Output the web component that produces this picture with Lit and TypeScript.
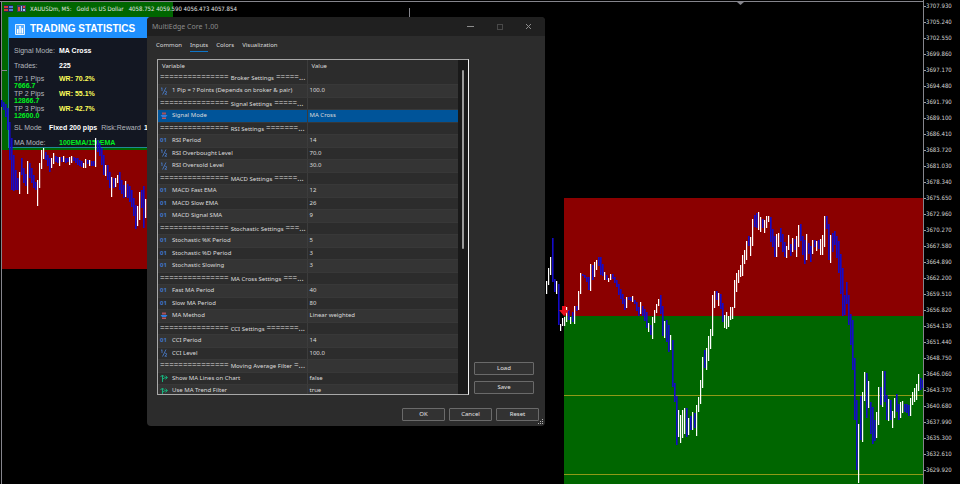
import { LitElement, html, svg, css } from "lit";
import { customElement, property, state } from "lit/decorators.js";
import { classMap } from "lit/directives/class-map.js";

type Kind = "group" | "int" | "real" | "enum" | "bool";
interface Param {
  kind: Kind;
  name: string;
  value: string;
  tail?: string;
}

const group = (name: string, tail: string): Param => ({ kind: "group", name, value: "", tail });
const param = (kind: Kind, name: string, value: string): Param => ({ kind, name, value });

const PARAMS: Param[] = [
  group("Broker Settings", "=====..."),
  param("real", "1 Pip = ? Points (Depends on broker & pair)", "100.0"),
  group("Signal Settings", "=====..."),
  param("enum", "Signal Mode", "MA Cross"),
  group("RSI Settings", "=======..."),
  param("int", "RSI Period", "14"),
  param("real", "RSI Overbought Level", "70.0"),
  param("real", "RSI Oversold Level", "30.0"),
  group("MACD Settings", "=====..."),
  param("int", "MACD Fast EMA", "12"),
  param("int", "MACD Slow EMA", "26"),
  param("int", "MACD Signal SMA", "9"),
  group("Stochastic Settings", "===..."),
  param("int", "Stochastic %K Period", "5"),
  param("int", "Stochastic %D Period", "3"),
  param("int", "Stochastic Slowing", "3"),
  group("MA Cross Settings", "===..."),
  param("int", "Fast MA Period", "40"),
  param("int", "Slow MA Period", "80"),
  param("enum", "MA Method", "Linear weighted"),
  group("CCI Settings", "=======..."),
  param("int", "CCI Period", "14"),
  param("real", "CCI Level", "100.0"),
  group("Moving Average Filter", "=..."),
  param("bool", "Show MA Lines on Chart", "false"),
  param("bool", "Use MA Trend Filter", "true"),
];

// Candles two units apart: start x, then "colour high-low" for each bar.
const parse = (start: number, text: string) =>
  text
    .trim()
    .split(/\s+/)
    .map((bar, i) => {
      const [high, low] = bar.slice(1).split("-").map(Number);
      return { x: start + i * 2, up: bar[0] === "w", high, low };
    });

const LEFT = parse(
  1,
  `b100-107 b102-110 b104-117 b108-130 b122-160 b138-190 b155-191 b170-190 b178-190 w172-194 b158-175 b168-183 b174-186
   w161-194 b163-178 b168-183 b175-188 b182-190 w180-206 w163-188 w150-169 w148-159 b152-160 b155-166 b158-172
   w158-168 w153-164 b156-162 b157-163 w157-166 b157-162 w156-162 b158-163 b158-162 w157-165 w156-163 b157-161
   b158-163 b158-165 b160-166 b161-167 w163-168 w159-168 b160-164 w160-166 b161-166 b161-166 w138-167 b140-152
   b143-156 b148-165 b155-175 w165-176 b165-180 b172-188 w177-197 b178-188 w178-187 w175-183 b172-190 b180-194
   b185-198 w181-197 b184-198 b186-202 b190-207 b198-216 b205-229 w206-226 w192-220 b190-208 b186-228 w199-218`,
);

const RIGHT = parse(
  546,
  `w281-294 w268-285 w257-275 b238-282 b279-292 w281-294 b284-325 w324-331 w318-326 w317-326 w307-322
   b310-320 w317-324 b312-322 w306-324 b306-311 w291-310 w273-294 b274-276 b275-278 b277-282 b277-290
   w264-291 b265-280 w262-277 w260-270 b257-266 b257-275 b264-276 w272-280 b275-280 w278-282 w274-280 b274-279
   b277-283 b280-287 b284-295 b289-299 b294-304 b299-310 w297-308 b297-300 b297-301 w296-302 b300-304 b302-311
   b307-316 w302-314 b306-316 b309-321 b312-328 w323-332 b325-335 w317-339 w310-323 w304-313 w299-306 b295-314
   b306-336 w321-338
   b320-342 b325-352 w335-350 b340-387 b383-402 b396-445 w410-437 w415-443 w410-438 w408-434 b408-437 w418-435
   b416-430 w412-430 b413-428 w405-436 w397-412 w380-404 w357-388 b350-368 w348-370 w336-361 w329-349 w295-336
   w291-308 b291-300 w293-306 b294-309 b303-322 w315-328 w312-329 w316-327 w307-320 w307-319 w280-308 w273-292
   w270-283 w265-277 w255-276 w250-264 w241-260 b236-246 w237-256 w219-246 b215-227 b213-228 w212-230 w217-232
   b219-228 w220-233 w216-228 w216-222 b217-242 b229-247 b236-257 w234-257 w233-247 b228-242 b234-252 b242-257
   w246-258 w235-250 b244-256 w238-252 b239-250 w236-257 w225-247 b224-241 b236-255 b240-264 w234-260 b243-254
   b246-262 w240-254 b240-247 w241-251 b240-249 w239-255 w235-255 w216-247 b216-229 b224-260 w235-263 b233-252
   b231-245 b236-258 b241-273 b254-294 b268-316 b295-315 b282-304 b295-325 b314-345 b320-370 b358-420 b400-470
   w424-483 b396-440 w392-442 w372-401 b373-418 w381-408 b402-434 b407-444 b420-441 w412-438 w387-425 b387-405
   w371-407 b371-402 b395-420 w399-421 b400-420 w411-428 w398-418 b394-412 b404-420 w402-418 w401-413 b404-412
   b404-413 b405-416 w398-416 w392-405 w388-402 w384-400 w374-391 b378-390 b380-388`,
);

@customElement("price-chart")
export class PriceChart extends LitElement {
  @property() layer: "zones" | "candles" = "zones";

  static styles = css`
    :host { display: block; pointer-events: none; }
    svg { display: block; width: 100%; height: 100%; }
    .loss { fill: #8b0000; }
    .gain { fill: #006600; }
    .frame { fill: #85858c; }
    .level { fill: #8f9a18; }
    .up { fill: #ffffff; }
    .down { fill: #150ac8; }
    .sell { fill: #e8101c; }
  `;

  render() {
    return this.layer === "zones"
      ? html`<svg viewBox="0 0 923 484" preserveAspectRatio="none" aria-hidden="true">
          <rect class="gain" x="2" y="2" width="171" height="148" />
          <rect class="loss" x="2" y="150" width="171" height="119" />
          <rect class="loss" x="564" y="198" width="359" height="118" />
          <rect class="gain" x="564" y="316" width="359" height="168" />
          <rect class="level" x="564" y="395" width="359" height="1" />
          <rect class="level" x="564" y="474" width="359" height="1" />
          <rect class="frame" x="0" y="1" width="923" height="1" />
          <rect class="frame" x="1" y="1" width="1" height="483" />
          <rect class="frame" x="2" y="70" width="5" height="1" />
          <rect class="frame" x="409" y="8" width="1" height="9" />
          <path class="frame" d="M737 2h7l-3.500 3z" />
        </svg>`
      : html`<svg viewBox="0 0 923 484" preserveAspectRatio="none" role="img" aria-label="XAUUSDm candles">
          ${[...LEFT, ...RIGHT].map(
            (c) => svg`<rect class=${c.up ? "up" : "down"} x=${c.x} y=${c.high}
              width=${c.up ? 1.2 : 1.6} height=${c.low - c.high} />`,
          )}
          <path class="sell" d="M562 306h4v4h3l-5 6-5-6h3z" />
        </svg>`;
  }
}

@customElement("price-axis")
export class PriceAxis extends LitElement {
  static styles = css`
    :host {
      display: block; overflow: hidden;
      border-left: 1px solid #85858c; background: #000; color: #d4d4d4;
      font: 6px/16px "DejaVu Sans Condensed", "DejaVu Sans", sans-serif;
    }
    ol { list-style: none; margin: -2px 0 0; padding: 0; }
    li { display: flex; align-items: center; height: 16px; }
    li::before { content: ""; width: 2px; height: 1px; background: #a0a0a0; }
  `;

  render() {
    return html`<ol>
      ${Array.from({ length: 30 }, (_, i) => html`<li>${(3707.93 - 2.69 * i).toFixed(3)}</li>`)}
    </ol>`;
  }
}

@customElement("trading-stats")
export class TradingStats extends LitElement {
  static styles = css`
    :host {
      display: block; box-sizing: border-box; background: #131722; color: #b4b7bf;
      border: 1px solid #1e8a96; border-top: 0; overflow: hidden;
      font: 7px/8px "Liberation Sans", Arial, sans-serif;
    }
    h2 {
      display: flex; align-items: center; gap: 5px; height: 21px; margin: 0 -1px; padding: 3px 0 0 7px;
      box-sizing: border-box;
      background: #1e90ff; color: #fff; font-size: 10px; line-height: 18px; font-weight: 900; white-space: nowrap;
    }
    h2 svg { width: 10px; height: 11px; }
    dl { margin: 0; padding: 9px 0 0 5px; display: grid; row-gap: 7px; white-space: nowrap; }
    .row { display: grid; grid-template-columns: 45px 1fr; }
    .row.wide { grid-template-columns: 35px 1fr; }
    .targets { display: grid; row-gap: 1px; margin: -2px 0; }
    .target { display: grid; grid-template-columns: 45px 1fr; line-height: 7px; }
    dt, dd { margin: 0; }
    dd { color: #fff; font-weight: bold; }
    .rate { color: #ffff5a; }
    .pips, .trend { color: #00f020; }
    .pips { grid-column: 1; }
    .ratio { color: #b4b7bf; font-weight: normal; padding: 0 3px 0 4px; }
  `;

  render() {
    const target = (n: number, rate: string, pips: string) => html`<div class="target">
      <dt>TP ${n} Pips</dt>
      <dd class="rate">WR: ${rate}</dd>
      <dd class="pips">${pips}</dd>
    </div>`;
    return html`
      <h2>
        <svg viewBox="0 0 10 11" aria-hidden="true">
          <path d="M.5.500h9v10h-9z" fill="#5aaeff" stroke="#e8f4ff" />
          <path d="M2 5h1.500v4.500H2zM4.300 2h1.500v7.500H4.300zM6.600 4h1.500v5.500H6.600z" fill="#fff" />
        </svg>
        TRADING STATISTICS
      </h2>
      <dl>
        <div class="row"><dt>Signal Mode:</dt><dd>MA Cross</dd></div>
        <div class="row"><dt>Trades:</dt><dd>225</dd></div>
        <div class="targets">
          ${target(1, "70.2%", "7666.7")} ${target(2, "55.1%", "12866.7")} ${target(3, "42.7%", "12600.0")}
        </div>
        <div class="row wide">
          <dt>SL Mode</dt>
          <dd>Fixed 200 pips<span class="ratio">Risk:Reward</span>1</dd>
        </div>
        <div class="row"><dt>MA Mode:</dt><dd class="trend">100EMA/150EMA</dd></div>
      </dl>
    `;
  }
}

@customElement("inputs-dialog")
export class InputsDialog extends LitElement {
  @state() private selected = 3;
  @state() private tab = "Inputs";

  static styles = css`
    :host {
      display: block; box-sizing: border-box; overflow: hidden; border-radius: 4px; background: #2c2c2c;
      color: #dcdcdc; font: 6px/12px "Noto Sans", "Open Sans", sans-serif;
    }
    button { font: inherit; color: inherit; background: none; border: 0; padding: 0; margin: 0; }
    header {
      display: flex; align-items: center; height: 19px; padding: 0 12px 0 5px; background: #202020;
      color: #8c8c8c; font-size: 7px;
    }
    h1 { flex: 1; margin: 0; font-size: inherit; font-weight: normal; }
    .controls { display: flex; gap: 20px; }
    .controls button { width: 9px; height: 9px; display: flex; }
    .controls svg { width: 9px; height: 9px; fill: none; stroke: #8c8c8c; }
    .controls .off { stroke: #484848; }
    nav { display: flex; gap: 8px; padding: 4px 9px 7px; }
    nav button { line-height: 11px; border-bottom: 1px solid transparent; }
    nav .active { border-color: #0f76c8; }
    .body { display: flex; align-items: flex-end; gap: 5px; padding: 0 10px; }
    .list {
      box-sizing: border-box; width: 312px; height: 336px; display: flex; overflow: hidden;
      border: 1px solid #a8a8a8; border-right-color: #f4f4f4;
    }
    table { flex: 1; border-collapse: collapse; table-layout: fixed; width: 100%; align-self: flex-start; }
    .first { width: 149px; }
    tr { height: 12px; }
    tr:nth-child(even) { height: 13px; background: #343434; }
    th, td {
      padding: 0; text-align: left; font-weight: normal; line-height: 11px; white-space: nowrap; overflow: hidden;
      border-bottom: 1px solid #383838;
    }
    td + td, th + th { border-left: 1px solid #3c3c3c; padding-left: 2px; }
    thead th { border-bottom: 0; padding-left: 4px; line-height: 12px; }
    thead th + th { padding-left: 4px; }
    .selected, tr.selected:nth-child(even) { background: #005499; }
    .cell { display: flex; align-items: center; gap: 4px; height: 11px; padding-left: 2px; }
    .cell.group { align-items: baseline; gap: 2px; line-height: 9px; }
    .cell svg { width: 8px; height: 8px; flex: none; }
    .int { width: 8px; color: #3f74c8; font-weight: bold; }
    .rule { font-size: 8px; }
    .scroll { width: 10px; background: #191919; display: flex; justify-content: center; padding-top: 10px; }
    .thumb { width: 2px; height: 179px; background: #9a9a9a; border-radius: 1px; }
    .side { display: grid; gap: 6px; width: 60px; padding-bottom: 1px; }
    .button {
      height: 13px; box-sizing: border-box; border: 1px solid #6a6a6a; border-radius: 1px;
      background: #323232; color: #e4e4e4; line-height: 11px;
    }
    footer { display: flex; justify-content: flex-end; gap: 4px; padding: 13px 6px 5px; position: relative; }
    footer .button { width: 43px; }
    .grip { position: absolute; right: 1px; bottom: 1px; width: 6px; height: 6px; fill: #b4b4b4; }
  `;

  private icon(kind: Kind) {
    switch (kind) {
      case "int":
        return html`<span class="int">01</span>`;
      case "real":
        return html`<svg viewBox="0 0 8 8" fill="none" stroke="#4a7fd0" stroke-width=".8" aria-hidden="true">
          <path d="M1 1.500l1-.8v3.300M6 .5L2.500 7.500M4.800 4.700q1.200-1 1.800 0t-1.800 2.500h2.200" />
        </svg>`;
      case "enum":
        return html`<svg viewBox="0 0 8 8" aria-hidden="true">
          <path d="M2 .5h4v2H2z" fill="#a8505c" />
          <path d="M.5 3h7l-1.500 2h-4z" fill="#2f7de0" />
          <path d="M2 5.500h4v1.500h-4z" fill="#c05560" />
        </svg>`;
      default:
        return html`<svg viewBox="0 0 8 8" fill="none" stroke="#17b17c" aria-hidden="true">
          <path d="M2.500 8V1.200M.5 3l2-2 1.700 1.800M2.500 5.500q1-2 4.500-2M5.500 1.800l2 1.700-2 1.800" />
        </svg>`;
    }
  }

  render() {
    return html`
      <header>
        <h1>MultiEdge Core 1.00</h1>
        <div class="controls">
          <button aria-label="Minimize"><svg viewBox="0 0 9 9"><path d="M1 4.500h7" /></svg></button>
          <button aria-label="Maximize" disabled>
            <svg class="off" viewBox="0 0 9 9"><rect x="2.500" y="2.500" width="5" height="5" /></svg>
          </button>
          <button aria-label="Close"><svg viewBox="0 0 9 9"><path d="M2 2l5 5M7 2l-5 5" /></svg></button>
        </div>
      </header>
      <nav>
        ${["Common", "Inputs", "Colors", "Visualization"].map(
          (t) => html`<button class=${classMap({ active: t === this.tab })} @click=${() => (this.tab = t)}>${t}</button>`,
        )}
      </nav>
      <div class="body">
        <div class="list">
          <table>
            <colgroup><col class="first" /><col /></colgroup>
            <thead>
              <tr><th scope="col">Variable</th><th scope="col">Value</th></tr>
            </thead>
            <tbody>
              ${PARAMS.map(
                (p, i) => html`<tr class=${classMap({ selected: i === this.selected })} @click=${() => (this.selected = i)}>
                  <td>
                    <div class=${classMap({ cell: true, group: p.kind === "group" })}>
                      ${p.kind === "group"
                        ? html`<span class="rule">===============</span><span>${p.name}</span
                            ><span class="rule">${p.tail}</span>`
                        : html`${this.icon(p.kind)}<span>${p.name}</span>`}
                    </div>
                  </td>
                  <td>${p.value}</td>
                </tr>`,
              )}
            </tbody>
          </table>
          <div class="scroll"><div class="thumb"></div></div>
        </div>
        <div class="side">
          <button class="button">Load</button>
          <button class="button">Save</button>
        </div>
      </div>
      <footer>
        <button class="button">OK</button>
        <button class="button">Cancel</button>
        <button class="button">Reset</button>
        <svg class="grip" viewBox="0 0 6 6" aria-hidden="true">
          <path d="M4 0h1v1H4zM2 2h1v1H2zM4 2h1v1H4zM0 4h1v1H0zM2 4h1v1H2zM4 4h1v1H4z" />
        </svg>
      </footer>
    `;
  }
}

@customElement("app-root")
export class AppRoot extends LitElement {
  static styles = css`
    :host {
      display: grid; grid-template-columns: 1fr 37px; height: 100vh; overflow: hidden; background: #000;
    }
    main { position: relative; overflow: hidden; }
    price-chart { position: absolute; inset: 0; }
    .symbol {
      position: relative; display: flex; align-items: center; gap: 4px; padding: 4px 0 0 4px; height: 9px;
      color: #e6e6e6; font: 6px/9px "DejaVu Sans Condensed", "DejaVu Sans", sans-serif; white-space: pre;
    }
    .symbol svg { width: 9px; height: 7px; }
    trading-stats { position: absolute; left: 8px; top: 17px; width: 173px; }
    inputs-dialog { position: absolute; left: 147px; top: 17px; width: 398px; }
  `;

  render() {
    return html`
      <main>
        <price-chart layer="zones"></price-chart>
        <div class="symbol">
          <svg viewBox="0 0 9 7" aria-hidden="true">
            <path d="M0 0h9v7H0z" fill="#222a50" /><path d="M0 1h4v2H0zM0 4h4v2H0z" fill="#d03a3a" />
            <path d="M5 1h4v2H5zM5 4h4v2H5z" fill="#4f7ed0" />
          </svg>
          <svg viewBox="0 0 9 7" aria-hidden="true">
            <path d="M0 0h9v7H0z" fill="#354060" /><path d="M1 2h2v4H1zM6 1h2v2H6z" fill="#e04848" />
            <path d="M4 1h1v5H4zM6 4h2v2H6z" fill="#9cc4f0" />
          </svg>
          <span>XAUUSDm, M5:   Gold vs US Dollar   4058.752 4059.590 4056.473 4057.854</span>
        </div>
        <trading-stats></trading-stats>
        <price-chart layer="candles"></price-chart>
        <inputs-dialog></inputs-dialog>
      </main>
      <price-axis></price-axis>
    `;
  }
}
